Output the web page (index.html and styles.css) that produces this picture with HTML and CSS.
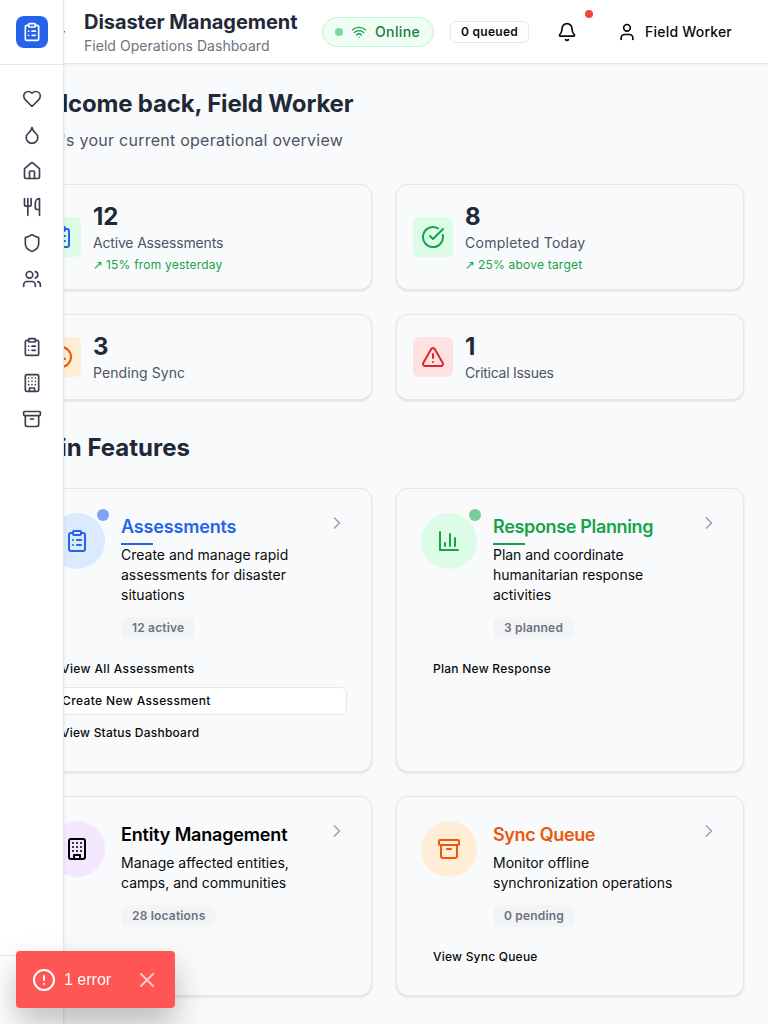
FILE: index.html
```html
<!DOCTYPE html>
<html lang="en">
<head>
<meta charset="utf-8">
<title>Disaster Management</title>
<link rel="stylesheet" href="styles.css">
</head>
<body>
<svg class="sprite" aria-hidden="true">
  <symbol id="clipboard" viewBox="0 0 24 24"><rect width="8" height="4" x="8" y="2" rx="1"/><path d="M16 4h2a2 2 0 0 1 2 2v14a2 2 0 0 1-2 2H6a2 2 0 0 1-2-2V6a2 2 0 0 1 2-2h2M12 11h4M12 16h4M8 11h.01M8 16h.01"/></symbol>
  <symbol id="heart" viewBox="0 0 24 24"><path d="M19 14c1.49-1.46 3-3.21 3-5.5A5.5 5.5 0 0 0 16.5 3c-1.76 0-3 .5-4.5 2-1.5-1.5-2.74-2-4.5-2A5.5 5.5 0 0 0 2 8.5c0 2.3 1.5 4.05 3 5.5l7 7Z"/></symbol>
  <symbol id="droplet" viewBox="0 0 24 24"><path d="M12 22a7 7 0 0 0 7-7c0-2-1-3.9-3-5.5s-3.500-4-4-6.500c-.5 2.500-2 4.900-4 6.500C6 11.100 5 13 5 15a7 7 0 0 0 7 7z"/></symbol>
  <symbol id="house" viewBox="0 0 24 24"><path d="M15 21v-8a1 1 0 0 0-1-1h-4a1 1 0 0 0-1 1v8"/><path d="M3 10a2 2 0 0 1 .709-1.528l7-5.999a2 2 0 0 1 2.582 0l7 5.999A2 2 0 0 1 21 10v9a2 2 0 0 1-2 2H5a2 2 0 0 1-2-2z"/></symbol>
  <symbol id="utensils" viewBox="0 0 24 24"><path d="M3 2v7c0 1.100.9 2 2 2h4a2 2 0 0 0 2-2V2M7 2v20M21 15V2a5 5 0 0 0-5 5v6c0 1.100.9 2 2 2h3Zm0 0v7"/></symbol>
  <symbol id="shield" viewBox="0 0 24 24"><path d="M20 13c0 5-3.500 7.500-7.660 8.950a1 1 0 0 1-.67-.01C7.500 20.500 4 18 4 13V6a1 1 0 0 1 1-1c2 0 4.500-1.200 6.240-2.720a1.170 1.170 0 0 1 1.520 0C14.510 3.810 17 5 19 5a1 1 0 0 1 1 1z"/></symbol>
  <symbol id="users" viewBox="0 0 24 24"><path d="M16 21v-2a4 4 0 0 0-4-4H6a4 4 0 0 0-4 4v2"/><circle cx="9" cy="7" r="4"/><path d="M22 21v-2a4 4 0 0 0-3-3.870M16 3.130a4 4 0 0 1 0 7.750"/></symbol>
  <symbol id="building" viewBox="0 0 24 24"><rect width="16" height="20" x="4" y="2" rx="2"/><path d="M9 22v-4h6v4M8 6h.01M16 6h.01M12 6h.01M12 10h.01M12 14h.01M16 10h.01M16 14h.01M8 10h.01M8 14h.01"/></symbol>
  <symbol id="archive" viewBox="0 0 24 24"><rect width="20" height="5" x="2" y="3" rx="1"/><path d="M4 8v11a2 2 0 0 0 2 2h12a2 2 0 0 0 2-2V8M10 12h4"/></symbol>
  <symbol id="chevron" viewBox="0 0 24 24"><path d="m9 18 6-6-6-6"/></symbol>
  <symbol id="wifi" viewBox="0 0 24 24"><path d="M12 20h.01M2 8.820a15 15 0 0 1 20 0M5 12.859a10 10 0 0 1 14 0M8.500 16.429a5 5 0 0 1 7 0"/></symbol>
  <symbol id="bell" viewBox="0 0 24 24"><path d="M10.268 21a2 2 0 0 0 3.464 0"/><path d="M3.262 15.326A1 1 0 0 0 4 17h16a1 1 0 0 0 .740-1.673C19.410 13.956 18 12.499 18 8A6 6 0 0 0 6 8c0 4.499-1.411 5.956-2.738 7.326"/></symbol>
  <symbol id="user" viewBox="0 0 24 24"><path d="M19 21v-2a4 4 0 0 0-4-4H9a4 4 0 0 0-4 4v2"/><circle cx="12" cy="7" r="4"/></symbol>
  <symbol id="check" viewBox="0 0 24 24"><path d="M21.801 10A10 10 0 1 1 17 3.335"/><path d="m9 11 3 3L22 4"/></symbol>
  <symbol id="clock" viewBox="0 0 24 24"><circle cx="12" cy="12" r="10"/><path d="M12 6v6l4 2"/></symbol>
  <symbol id="warning" viewBox="0 0 24 24"><path d="m21.730 18-8-14a2 2 0 0 0-3.480 0l-8 14A2 2 0 0 0 4 21h16a2 2 0 0 0 1.730-3M12 9v4M12 17h.01"/></symbol>
  <symbol id="chart" viewBox="0 0 24 24"><path d="M3 3v18h18M18 17V9M13 17V5M8 17v-3"/></symbol>
  <symbol id="alert" viewBox="0 0 24 24"><circle cx="12" cy="12" r="10"/><path d="M12 8v4M12 16h.01"/></symbol>
  <symbol id="close" viewBox="0 0 24 24"><path d="M18 6 6 18M6 6l12 12"/></symbol>
</svg>

<aside class="sidebar">
  <div class="sidebar-head"><span class="logo"><svg class="icon"><use href="#clipboard"/></svg></span></div>
  <nav class="sidebar-nav">
    <div class="nav-group">
      <a class="nav-link"><svg class="icon"><use href="#heart"/></svg></a>
      <a class="nav-link"><svg class="icon"><use href="#droplet"/></svg></a>
      <a class="nav-link"><svg class="icon"><use href="#house"/></svg></a>
      <a class="nav-link"><svg class="icon"><use href="#utensils"/></svg></a>
      <a class="nav-link"><svg class="icon"><use href="#shield"/></svg></a>
      <a class="nav-link"><svg class="icon"><use href="#users"/></svg></a>
    </div>
    <div class="nav-group">
      <a class="nav-link"><svg class="icon"><use href="#clipboard"/></svg></a>
      <a class="nav-link"><svg class="icon"><use href="#building"/></svg></a>
      <a class="nav-link"><svg class="icon"><use href="#archive"/></svg></a>
    </div>
  </nav>
  <div class="sidebar-foot"></div>
</aside>

<header class="header">
  <div class="brand">
    <svg class="icon toggle"><use href="#chevron"/></svg>
    <div>
      <h1 class="brand-title">Disaster Management</h1>
      <p class="brand-sub">Field Operations Dashboard</p>
    </div>
  </div>
  <div class="header-tools">
    <div class="online"><span class="online-dot"></span><svg class="icon icon-sm"><use href="#wifi"/></svg><span>Online</span></div>
    <span class="queued">0 queued</span>
    <button class="bell"><svg class="icon"><use href="#bell"/></svg><span class="bell-dot"></span></button>
    <button class="account"><svg class="icon"><use href="#user"/></svg>Field Worker</button>
  </div>
</header>

<main class="main">
  <section class="welcome">
    <h2 class="heading tight">Welcome back, Field Worker</h2>
    <p class="welcome-sub">Here's your current operational overview</p>
  </section>

  <section class="grid">
    <div class="card stat">
      <span class="stat-icon blue-on-green"><svg class="icon icon-lg"><use href="#clipboard"/></svg></span>
      <div><p class="stat-value">12</p><p class="stat-label tight">Active Assessments</p><p class="stat-trend"><span class="arrow">↗</span> 15% from yesterday</p></div>
    </div>
    <div class="card stat">
      <span class="stat-icon green"><svg class="icon icon-lg"><use href="#check"/></svg></span>
      <div><p class="stat-value">8</p><p class="stat-label wide">Completed Today</p><p class="stat-trend"><span class="arrow">↗</span> 25% above target</p></div>
    </div>
    <div class="card stat">
      <span class="stat-icon orange"><svg class="icon icon-lg"><use href="#clock"/></svg></span>
      <div><p class="stat-value">3</p><p class="stat-label">Pending Sync</p></div>
    </div>
    <div class="card stat">
      <span class="stat-icon red"><svg class="icon icon-lg"><use href="#warning"/></svg></span>
      <div><p class="stat-value">1</p><p class="stat-label tighter">Critical Issues</p></div>
    </div>
  </section>

  <h2 class="heading features-heading">Main Features</h2>

  <section class="grid">
    <article class="card feature">
      <div class="feature-head">
        <span class="feature-icon blue"><svg class="icon icon-lg"><use href="#clipboard"/></svg><span class="feature-dot dot-blue"></span></span>
        <div class="feature-body">
          <h3 class="feature-title text-blue underlined tight">Assessments</h3>
          <p class="feature-desc">Create and manage rapid assessments for disaster situations</p>
          <span class="badge">12 active</span>
        </div>
        <svg class="icon chevron"><use href="#chevron"/></svg>
      </div>
      <div class="actions">
        <a class="action wider">View All Assessments</a>
        <a class="action action-outline wider">Create New Assessment</a>
        <a class="action">View Status Dashboard</a>
      </div>
    </article>
    <article class="card feature">
      <div class="feature-head">
        <span class="feature-icon green"><svg class="icon icon-lg"><use href="#chart"/></svg><span class="feature-dot dot-green"></span></span>
        <div class="feature-body">
          <h3 class="feature-title text-green underlined tightest">Response Planning</h3>
          <p class="feature-desc snug">Plan and coordinate humanitarian response activities</p>
          <span class="badge">3 planned</span>
        </div>
        <svg class="icon chevron"><use href="#chevron"/></svg>
      </div>
      <div class="actions"><a class="action wide">Plan New Response</a></div>
    </article>
    <article class="card feature">
      <div class="feature-head">
        <span class="feature-icon purple"><svg class="icon icon-lg"><use href="#building"/></svg></span>
        <div class="feature-body">
          <h3 class="feature-title text-black tight">Entity Management</h3>
          <p class="feature-desc">Manage affected entities, camps, and communities</p>
          <span class="badge">28 locations</span>
        </div>
        <svg class="icon chevron"><use href="#chevron"/></svg>
      </div>
    </article>
    <article class="card feature">
      <div class="feature-head">
        <span class="feature-icon orange"><svg class="icon icon-lg"><use href="#archive"/></svg></span>
        <div class="feature-body">
          <h3 class="feature-title text-orange tightest">Sync Queue</h3>
          <p class="feature-desc">Monitor offline synchronization operations</p>
          <span class="badge">0 pending</span>
        </div>
        <svg class="icon chevron"><use href="#chevron"/></svg>
      </div>
      <div class="actions"><a class="action">View Sync Queue</a></div>
    </article>
  </section>
</main>

<div class="toast">
  <svg class="icon icon-lg"><use href="#alert"/></svg>
  <span>1 error</span>
  <svg class="icon icon-lg toast-close"><use href="#close"/></svg>
</div>
</body>
</html>
```

FILE: styles.css
```css
*, *::before, *::after { box-sizing: border-box; }
body, h1, h2, h3, p { margin: 0; }
body {
  height: 1024px;
  overflow: hidden;
  background: #f9fafc;
  color: #0a0a0a;
  font-family: Inter, sans-serif;
  font-size: 14px;
  line-height: 20px;
}
button { padding: 0; border: 0; background: none; color: inherit; font: inherit; }

.sprite { position: absolute; width: 0; height: 0; }
.icon {
  display: block;
  flex: none;
  width: 20px;
  height: 20px;
  fill: none;
  stroke: currentColor;
  stroke-width: 2;
  stroke-linecap: round;
  stroke-linejoin: round;
}
.icon-sm { width: 16px; height: 16px; }
.icon-lg { width: 24px; height: 24px; }

/* Sidebar lies over the page's left edge */
.sidebar {
  position: fixed;
  inset: 0 auto 0 0;
  z-index: 10;
  display: flex;
  flex-direction: column;
  width: 64px;
  background: #fff;
  border-right: 1px solid #e5e7eb;
  box-shadow: 0 1px 3px rgba(0, 0, 0, .1), 0 1px 2px -1px rgba(0, 0, 0, .1);
}
.sidebar-head { height: 65px; padding: 16px; border-bottom: 1px solid #e5e7eb; }
.logo {
  display: flex;
  align-items: center;
  justify-content: center;
  width: 32px;
  height: 32px;
  border-radius: 8px;
  background: #2563eb;
  color: #fff;
}
.sidebar-nav { display: flex; flex: 1; flex-direction: column; gap: 32px; padding: 16px 0; }
.nav-link { display: flex; align-items: center; height: 36px; padding-left: 22px; color: #374151; }
.sidebar-foot { height: 69px; border-top: 1px solid #e5e7eb; }

.header {
  position: relative;
  display: flex;
  align-items: center;
  justify-content: space-between;
  height: 64px;
  padding: 0 24px 0 57px;
  background: #fff;
  border-bottom: 1px solid #e5e7eb;
  box-shadow: 0 1px 2px rgba(0, 0, 0, .05);
}
.brand { display: flex; align-items: center; gap: 15px; padding-top: 1px; white-space: nowrap; }
.toggle { width: 12px; height: 12px; }
.brand-title { color: #1f2937; font-size: 20px; font-weight: 700; letter-spacing: -.06px; line-height: 28px; }
.brand-sub { color: #6b7280; letter-spacing: .04px; }
.header-tools { display: flex; align-items: center; gap: 16px; padding-top: 1px; white-space: nowrap; }
.online {
  display: flex;
  align-items: center;
  gap: 8px;
  height: 30px;
  padding: 0 13px 0 12px;
  border: 1px solid #bbf7d0;
  border-radius: 15px;
  background: #f0fdf4;
  color: #15803d;
  font-weight: 500;
  letter-spacing: .36px;
}
.online .icon { color: #16a34a; }
.online-dot { width: 8px; height: 8px; border-radius: 50%; background: #76dc9a; }
.queued {
  padding: 2px 10px;
  border: 1px solid #e5e7eb;
  border-radius: 6px;
  font-size: 12px;
  font-weight: 600;
  letter-spacing: .28px;
  line-height: 16px;
}
.bell {
  position: relative;
  display: flex;
  align-items: center;
  justify-content: center;
  width: 44px;
  height: 36px;
}
.bell-dot {
  position: absolute;
  top: -4px;
  right: -4px;
  width: 8px;
  height: 8px;
  border-radius: 50%;
  background: #ef4444;
}
.account { display: flex; align-items: center; gap: 8px; height: 36px; padding: 0 12px; font-weight: 500; letter-spacing: .2px; }

.main { padding: 24px; }
.heading { color: #1f2937; font-size: 24px; font-weight: 700; line-height: 32px; }
.welcome { margin-bottom: 32px; }
.welcome-sub { margin-top: 8px; color: #4b5563; font-size: 16px; letter-spacing: .25px; line-height: 24px; }
.features-heading { margin: 32px 0 24px; }
.grid { display: grid; grid-template-columns: 1fr 1fr; gap: 24px; }
.card {
  border: 1px solid #e5e7eb;
  border-radius: 12px;
  background: #f9fafc;
  box-shadow: 0 1px 3px rgba(0, 0, 0, .1), 0 1px 2px -1px rgba(0, 0, 0, .1);
}

.stat { display: flex; align-items: center; gap: 12px; padding: 16px; }
.stat-icon {
  display: flex;
  align-items: center;
  justify-content: center;
  width: 40px;
  height: 40px;
  border-radius: 6px;
}
.stat-value { color: #1f2937; font-size: 24px; font-weight: 700; line-height: 32px; }
.stat-label { color: #4b5563; letter-spacing: .08px; }
.stat-trend { margin-top: 4px; color: #16a34a; font-size: 12px; letter-spacing: .2px; line-height: 16px; }
.arrow { font-family: "DejaVu Sans", sans-serif; letter-spacing: -.6px; line-height: 1; }

.blue-on-green { background: #dcfce7; color: #2563eb; }
.blue { background: #dbeafe; color: #2563eb; }
.green { background: #dcfce7; color: #16a34a; }
.orange { background: #ffedd5; color: #ea580c; }
.red { background: #fee2e2; color: #dc2626; }
.purple { background: #f3e8ff; color: #000; }
.text-black { color: #000; }
.text-blue { color: #2563eb; }
.text-green { color: #16a34a; }
.text-orange { color: #ea580c; }

.feature { padding: 24px; }
.feature-head { display: flex; align-items: flex-start; gap: 16px; }
.feature-icon {
  position: relative;
  display: flex;
  flex: none;
  align-items: center;
  justify-content: center;
  width: 56px;
  height: 56px;
  border-radius: 50%;
}
.feature-dot { position: absolute; top: -4px; right: -4px; width: 12px; height: 12px; border-radius: 50%; }
.dot-blue { background: #81a3f1; }
.dot-green { background: #7acb98; }
.feature-body { flex: 1; }
.feature-title { position: relative; font-size: 18px; font-weight: 600; line-height: 28px; }
.underlined::after {
  content: "";
  position: absolute;
  bottom: -4px;
  left: 0;
  width: 32px;
  height: 2px;
  background: currentColor;
}
.feature-desc { margin: 4px 0 12px; }
.badge {
  display: block;
  width: fit-content;
  padding: 3px 11px;
  border-radius: 6px;
  background: #f3f4f6;
  color: #6b7280;
  font-size: 12px;
  font-weight: 600;
  letter-spacing: .18px;
  line-height: 16px;
}
.chevron { color: #9ca3af; }
.actions { display: flex; flex-direction: column; gap: 4px; margin-top: 16px; }
.action { height: 28px; padding: 0 12px; font-size: 12px; font-weight: 500; letter-spacing: .22px; line-height: 28px; }
.action-outline { border: 1px solid #e5e7eb; border-radius: 6px; background: #fff; line-height: 26px; }

/* Tracking */
.tightest { letter-spacing: -.34px; }
.tighter { letter-spacing: -.27px; }
.tight { letter-spacing: -.17px; }
.snug { letter-spacing: -.05px; }
.wide { letter-spacing: .26px; }
.wider { letter-spacing: .38px; }

.toast {
  position: fixed;
  bottom: 16px;
  left: 16px;
  z-index: 20;
  display: flex;
  align-items: center;
  height: 57px;
  padding: 0 16px;
  border-radius: 4px;
  background: #f55;
  box-shadow: 0 16px 32px rgba(0, 0, 0, .25);
  color: #fff;
  font: 16px "Liberation Sans", sans-serif;
}
.toast span { margin: 0 24px 0 8px; }
.toast-close { opacity: .7; }
```
